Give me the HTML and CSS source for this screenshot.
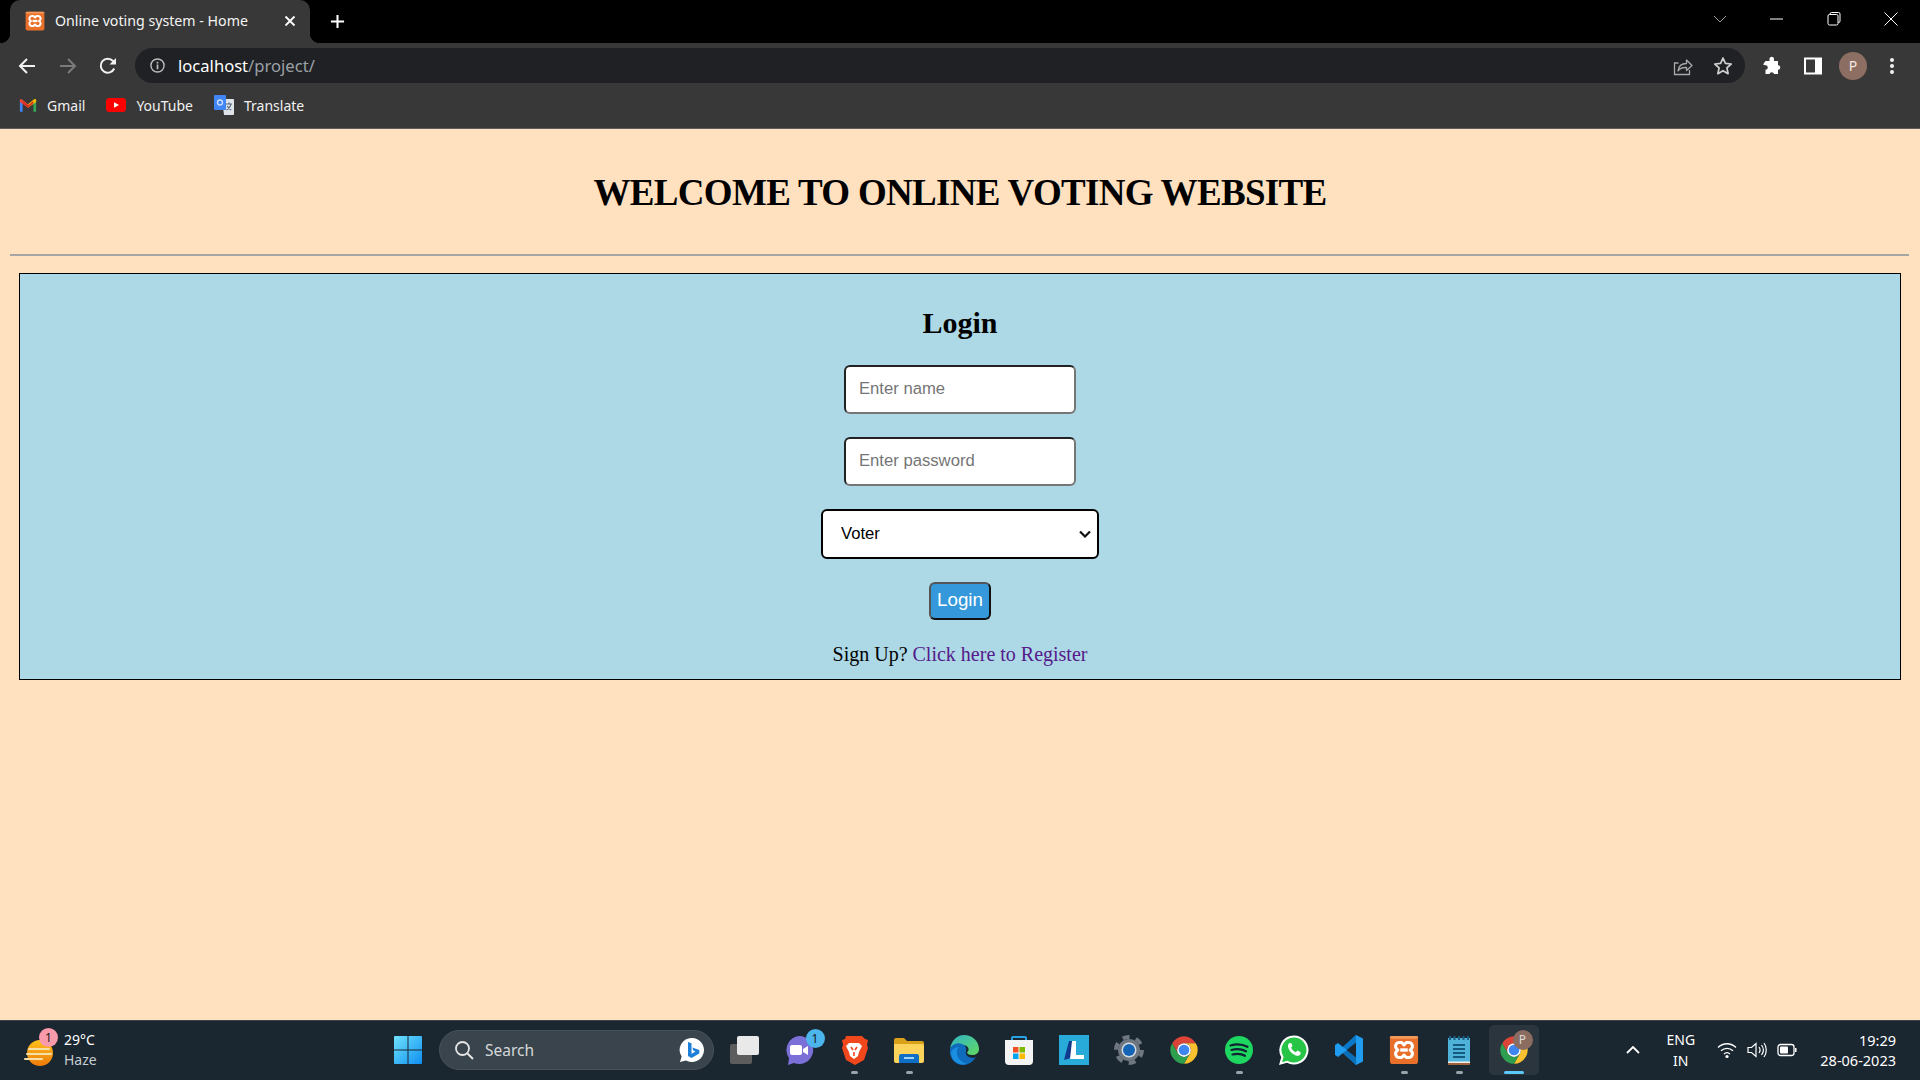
FILE: index.html
```html
<!DOCTYPE html>
<html lang="en">

<head>
    <meta charset="UTF-8">
    <title>Online voting system - Home</title>
    <link rel="stylesheet" href="styles.css">
</head>

<body>
    <svg class="defs" width="0" height="0">
        <symbol id="xampp" viewBox="0 0 32 32">
            <rect x="1" y="1" width="30" height="30" rx="3" fill="#e8702a"/>
            <rect x="1" y="1" width="30" height="3" rx="1.500" fill="#f29a5e"/>
            <path d="M11 8h2.500l2.500 2.500 2.500-2.500H21a4 4 0 0 1 3 6.600L22.500 16l1.500 1.400A4 4 0 0 1 21 24h-2.500L16 21.500 13.500 24H11a4 4 0 0 1-3-6.600L9.500 16 8 14.600A4 4 0 0 1 11 8z" fill="#e8702a" stroke="#fff" stroke-width="3.200" stroke-linejoin="round"/>
            <path d="M12 16h8" stroke="#fff" stroke-width="3.600"/>
        </symbol>
        <symbol id="chrome" viewBox="0 0 48 48">
            <path d="M43 13H24A11 11 0 0 0 14.500 29.500L5 13A22 22 0 0 1 43 13z" fill="#db4437"/>
            <path d="M43 13H24A11 11 0 0 1 33.500 29.500L24 46A22 22 0 0 0 43 13z" fill="#fbc02d"/>
            <path d="M24 46l9.500-16.500A11 11 0 0 1 14.500 29.500L5 13A22 22 0 0 0 24 46z" fill="#2e9e4f"/>
            <circle cx="24" cy="24" r="11" fill="#fff"/>
            <circle cx="24" cy="24" r="8.500" fill="#3f86f0"/>
        </symbol>
    </svg>

    <div class="browser">
        <div class="tabstrip">
            <div class="tab">
                <svg class="favicon"><use href="#xampp"/></svg>
                <span class="tab-title">Online voting system - Home</span>
                <svg class="tab-close" viewBox="0 0 12 12"><path d="M1.500 1.500l9 9m0-9l-9 9" stroke="#fff" stroke-width="1.800"/></svg>
            </div>
            <svg class="new-tab" viewBox="0 0 16 16"><path d="M8 1v14M1 8h14" stroke="#fff" stroke-width="2.200"/></svg>
            <div class="window-controls">
                <svg class="win-btn chevron" viewBox="0 0 14 8"><path d="M1 1l6 6 6-6" fill="none" stroke="#9a9a9a"/></svg>
                <svg class="win-btn" viewBox="0 0 14 14"><path d="M0 7h13" stroke="#fff"/></svg>
                <svg class="win-btn" viewBox="0 0 14 14"><path d="M3 2.500V2a1.500 1.500 0 0 1 1.500-1.500h7A1.500 1.500 0 0 1 13 2v7a1.500 1.500 0 0 1-1.500 1.500H11" fill="none" stroke="#fff"/><rect x="1" y="2.500" width="10" height="10.500" rx="1.500" fill="none" stroke="#fff"/></svg>
                <svg class="win-btn" viewBox="0 0 14 14"><path d="M.5.500l13 13m0-13l-13 13" stroke="#fff"/></svg>
            </div>
        </div>

        <div class="toolbar">
            <svg class="nav-icon" viewBox="0 0 18 18"><path d="M17 9H2.500M9 2L2 9l7 7" fill="none" stroke="#f1f1f1" stroke-width="2"/></svg>
            <svg class="nav-icon" viewBox="0 0 18 18"><path d="M1 9h14.500M9 2l7 7-7 7" fill="none" stroke="#7b7b7b" stroke-width="2"/></svg>
            <svg class="nav-icon" viewBox="0 0 18 18"><path d="M15.200 11.500A7 7 0 1 1 14 4l1.800 2" fill="none" stroke="#f1f1f1" stroke-width="2"/><path d="M17 1v6.500h-6.500z" fill="#f1f1f1"/></svg>
            <div class="omnibox">
                <svg class="info-icon" viewBox="0 0 16 16"><circle cx="8" cy="8" r="7" fill="none" stroke="#bdbdbd" stroke-width="1.500"/><path d="M8 7v5M8 4v1.800" stroke="#bdbdbd" stroke-width="1.800"/></svg>
                <span class="url">localhost<span class="url-path">/project/</span></span>
                <svg class="omni-icon share" viewBox="0 0 20 20"><path d="M5.500 7H1.500v11.500h15V14" fill="none" stroke="#a8a8a8" stroke-width="1.300"/><path d="M5 15c.5-5 4-7.500 8.500-7.500V4l5.500 5.500-5.500 5V11.500C9.500 11.300 6.500 12.500 5 15z" fill="none" stroke="#a8a8a8" stroke-width="1.300" stroke-linejoin="round"/></svg>
                <svg class="omni-icon star" viewBox="0 0 20 20"><path d="M10 2l2.400 5.400 5.800.6-4.300 3.900 1.200 5.800-5.100-3-5.100 3 1.200-5.800L1.800 8l5.800-.6z" fill="none" stroke="#d0d0d0" stroke-width="1.700" stroke-linejoin="round"/></svg>
            </div>
            <svg class="tool-icon puzzle" viewBox="0 0 20 20"><path d="M7.500 2.500a2.300 2.300 0 0 1 4.500 0V5h4v4.200a2.300 2.300 0 0 1 0 4.600V18h-4a2.300 2.300 0 0 0-4.500 0H3.500v-4.200a2.300 2.300 0 0 0 0-4.600L1 8.500 3.500 5h4z" fill="#fff"/></svg>
            <svg class="tool-icon panel" viewBox="0 0 18 18"><rect x="1" y="1.500" width="16" height="15" fill="none" stroke="#fff" stroke-width="2"/><rect x="11" y="1.500" width="6" height="15" fill="#fff"/></svg>
            <div class="avatar">P</div>
            <svg class="tool-icon dots" viewBox="0 0 6 18"><circle cx="3" cy="3" r="2" fill="#f1f1f1"/><circle cx="3" cy="9" r="2" fill="#f1f1f1"/><circle cx="3" cy="15" r="2" fill="#f1f1f1"/></svg>
        </div>

        <div class="bookmarks">
            <div class="bookmark">
                <svg class="bm-icon gmail" viewBox="0 0 20 16"><path d="M1 15V3l3 2v10z" fill="#4285f4"/><path d="M16 15V5l3-2v12z" fill="#34a853"/><path d="M1 4V2c0-1.200 1.300-1.700 2.200-1L10 6.500v4z" fill="#ea4335"/><path d="M19 4V2c0-1.200-1.300-1.700-2.200-1L10 6.500v4z" fill="#fbbc04"/><path d="M4 3l6 4.800L16 3v2.500l-6 5-6-5z" fill="#d93025"/></svg>
                <span>Gmail</span>
            </div>
            <div class="bookmark">
                <svg class="bm-icon youtube" viewBox="0 0 20 14"><rect width="20" height="14" rx="3.500" fill="#f00"/><path d="M8 4.200L13 7l-5 2.800z" fill="#fff"/></svg>
                <span>YouTube</span>
            </div>
            <div class="bookmark">
                <svg class="bm-icon translate" viewBox="0 0 20 20"><path d="M8 4h11a1 1 0 0 1 1 1v14a1 1 0 0 1-1 1H10z" fill="#dfe4ea"/><path d="M12 9h6m-3-1.500V9m2 0c-.6 3-2.500 5-4.500 6m.8-4c.8 1.800 2.400 3.300 4 4" fill="none" stroke="#5c6b7a" stroke-width="1.200"/><rect width="12" height="15" rx="1" fill="#4285f4"/><circle cx="6" cy="7.500" r="2.500" fill="none" stroke="#cfe0fb" stroke-width="1.300"/></svg>
                <span>Translate</span>
            </div>
        </div>
    </div>

    <main class="page">
        <h1 class="site-title">WELCOME TO ONLINE VOTING WEBSITE</h1>
        <hr class="rule">
        <section class="login-box">
            <h2 class="login-title">Login</h2>
            <form class="login-form">
                <input class="field" type="text" placeholder="Enter name">
                <input class="field" type="password" placeholder="Enter password">
                <select class="role">
                    <option>Voter</option>
                    <option>Group</option>
                </select>
                <button class="login-btn" type="button">Login</button>
            </form>
            <p class="signup">Sign Up? <a href="#" class="signup-link">Click here to Register</a></p>
        </section>
    </main>

    <footer class="taskbar">
        <div class="weather">
            <div class="weather-icon">
                <svg class="sun" viewBox="0 0 30 30">
                    <defs><linearGradient id="sung" x1="0" y1="0" x2="0" y2="1"><stop offset="0" stop-color="#fdc21a"/><stop offset="1" stop-color="#ee7a0c"/></linearGradient></defs>
                    <circle cx="16" cy="15" r="13" fill="url(#sung)"/>
                    <path d="M5 11h20M3 16h24M1 21h17" stroke="#f6dfa8" stroke-width="2" stroke-linecap="round"/>
                </svg>
                <span class="badge pink">1</span>
            </div>
            <div class="weather-text">
                <span class="temp">29°C</span>
                <span class="sky">Haze</span>
            </div>
        </div>

        <div class="app start">
            <svg class="app-icon" viewBox="0 0 30 30">
                <defs><linearGradient id="wing" x1="0" y1="0" x2="1" y2="1"><stop offset="0" stop-color="#6fe3fd"/><stop offset="1" stop-color="#0e8ef0"/></linearGradient></defs>
                <path d="M1 2a1 1 0 0 1 1-1h12.500v13.500H1zM15.500 1H28a1 1 0 0 1 1 1v12.500H15.500zM1 15.500h13.500V29H2a1 1 0 0 1-1-1zM15.500 15.500H29V28a1 1 0 0 1-1 1H15.500z" fill="url(#wing)"/>
            </svg>
        </div>

        <div class="search">
            <svg class="search-icon" viewBox="0 0 20 20"><circle cx="8.500" cy="8.500" r="6.500" fill="none" stroke="#e6e6e6" stroke-width="1.800"/><path d="M13.500 13.500L19 19" stroke="#e6e6e6" stroke-width="2"/></svg>
            <span class="search-text">Search</span>
            <svg class="bing" viewBox="0 0 26 26">
                <path d="M13 1a12 12 0 1 1-6 22.400L1 25l1.600-5.500A12 12 0 0 1 13 1z" fill="#fff"/>
                <path d="M9 5l3.500 1.300v10.500l4-2.300-2.200-1-1-3 7 2.500v3.500L12.500 21 9 19z" fill="#1d7fd8"/>
            </svg>
        </div>

        <div class="apps">
            <div class="app">
                <svg class="app-icon" viewBox="0 0 30 30"><rect x="1" y="9" width="22" height="20" rx="2" fill="#5d5d5d"/><rect x="8" y="1" width="22" height="19" rx="2" fill="#e9e9e9"/></svg>
            </div>
            <div class="app">
                <svg class="app-icon" viewBox="0 0 30 30"><path d="M15 1a14 14 0 1 1-5 27l-6 2 1-7A14 14 0 0 1 15 1z" fill="#7b6fd8"/><rect x="6" y="10" width="12" height="10" rx="2" fill="#fff"/><path d="M19 14l5-3v9l-5-3z" fill="#fff"/></svg>
                <span class="badge blue">1</span>
            </div>
            <div class="app">
                <svg class="app-icon" viewBox="0 0 30 30"><path d="M7 1h16l3 3 3 1-1 5 1 3-4 12-9 5-9-5L3 13l1-3-1-5 3-1z" fill="#f1471d"/><path d="M10 8h10l3 3-3 6-1 4-4 3-4-3-1-4-3-6z" fill="#fff"/><path d="M12 12l2 3m4-3l-2 3M15 17v4" stroke="#f1471d" stroke-width="1.600"/></svg>
                <span class="dot"></span>
            </div>
            <div class="app">
                <svg class="app-icon" viewBox="0 0 30 30"><path d="M0 5a2 2 0 0 1 2-2h8l3 3h15a2 2 0 0 1 2 2v3H0z" fill="#d9a019"/><path d="M0 9h28a2 2 0 0 1 2 2v15a2 2 0 0 1-2 2H2a2 2 0 0 1-2-2z" fill="#fcd45c"/><path d="M5 28v-7a2 2 0 0 1 2-2h16a2 2 0 0 1 2 2v7z" fill="#0f6fc6"/><rect x="10" y="22" width="10" height="2" fill="#9fd3f7"/></svg>
                <span class="dot"></span>
            </div>
            <div class="app">
                <svg class="app-icon" viewBox="0 0 30 30">
                    <defs><linearGradient id="edgeg" x1="0" y1="0" x2="1" y2="1"><stop offset="0" stop-color="#2fb4c9"/><stop offset="1" stop-color="#63d95f"/></linearGradient></defs>
                    <path d="M1 14C2 6 8 0 15 0c8 0 15 6 15 14 0 4-3 6-7 6-3 0-5-1-5-3 3-1 2-7-4-7-7 0-13 1-13 4z" fill="url(#edgeg)"/>
                    <path d="M1 14c2-5 8-7 12-5 3 1 5 4 4 7-1 4 2 7 8 7l2-1c-3 5-8 8-13 8C6 30 0 23 1 14z" fill="#0f6cbd"/>
                    <path d="M10 12c-4 3-3 14 8 17-8 2-15-3-16-10 0-4 4-7 8-7z" fill="#1a8ee0"/>
                </svg>
            </div>
            <div class="app">
                <svg class="app-icon" viewBox="0 0 30 30"><path d="M8 7V3a1 1 0 0 1 1-1h12a1 1 0 0 1 1 1v4" fill="none" stroke="#27a3e3" stroke-width="2"/><path d="M1 5h28v21a4 4 0 0 1-4 4H5a4 4 0 0 1-4-4z" fill="#f4f4f4"/><rect x="9" y="12" width="5.500" height="5.500" fill="#f25022"/><rect x="15.500" y="12" width="5.500" height="5.500" fill="#7fba00"/><rect x="9" y="18.500" width="5.500" height="5.500" fill="#00a4ef"/><rect x="15.500" y="18.500" width="5.500" height="5.500" fill="#ffb900"/></svg>
            </div>
            <div class="app">
                <svg class="app-icon" viewBox="0 0 30 30"><rect width="30" height="30" fill="#29abd9"/><path d="M10 6h5l-3 17-7 2z" fill="#123a8c"/><path d="M13 6h4v14h8v4H11z" fill="#fff"/></svg>
            </div>
            <div class="app">
                <svg class="app-icon" viewBox="0 0 30 30"><circle cx="15" cy="15" r="11" fill="#6f7780"/><circle cx="15" cy="15" r="13" fill="none" stroke="#6f7780" stroke-width="4" stroke-dasharray="7 6.600"/><circle cx="15" cy="15" r="7.500" fill="#d7dbdf"/><circle cx="15" cy="15" r="6" fill="#1465b5"/></svg>
            </div>
            <div class="app">
                <svg class="app-icon"><use href="#chrome"/></svg>
            </div>
            <div class="app">
                <svg class="app-icon" viewBox="0 0 30 30"><circle cx="15" cy="15" r="14" fill="#1ed760"/><path d="M6.500 10.500c6-1.800 12-1.300 17 1.300M7.500 15c5-1.400 10-1 14.500 1.300M8.500 19.500c4.500-1.100 9-.8 12.500 1.300" fill="none" stroke="#123" stroke-width="2.200" stroke-linecap="round"/></svg>
                <span class="dot"></span>
            </div>
            <div class="app">
                <svg class="app-icon" viewBox="0 0 30 30"><path d="M15 .5a14.500 14.500 0 1 1-7 27.200L0 30l2.300-7.800A14.500 14.500 0 0 1 15 .5z" fill="#fff"/><path d="M15 2.500a12.500 12.500 0 1 1-6.500 23.200L3 27.200l1.600-5.300A12.500 12.500 0 0 1 15 2.500z" fill="#28c445"/><path d="M10.500 8c-1.500 1-2 3-1 5.500 1.300 3 4 5.800 7.200 7 2.300.8 4 0 5-1.500l-.3-2-3-1.500-1.500 1.700c-2-.7-4-2.800-4.800-4.800L13.500 11l-1.300-3z" fill="#fff"/></svg>
            </div>
            <div class="app">
                <svg class="app-icon" viewBox="0 0 30 30"><path d="M22 0l7 3.500v23L22 30 9 18l-5 4-3-2v-10l3-2 5 4z" fill="#1f9cf0"/><path d="M22 0v8l-9 7-4-3z" fill="#0a78c8"/><path d="M22 30v-8l-9-7-4 3z" fill="#0a6fb8"/><path d="M22 7.500v15L12.500 15z" fill="#1a2530"/></svg>
            </div>
            <div class="app">
                <svg class="app-icon"><use href="#xampp"/></svg>
                <span class="dot"></span>
            </div>
            <div class="app">
                <svg class="app-icon" viewBox="0 0 30 30"><rect x="4" y="3" width="22" height="25" fill="#4fb3d9"/><path d="M4 28h22v2H4z" fill="#a0603a"/><path d="M4 26.500h22V28H4z" fill="#eee"/><path d="M6 1v4m4.500-4v4m4.500-4v4m4.500-4v4m4.500-4v4" stroke="#1a5f85" stroke-width="2"/><path d="M9 10h12M9 14h12M9 18h12M9 22h12" stroke="#145a7e" stroke-width="2"/></svg>
                <span class="dot"></span>
            </div>
            <div class="app active">
                <svg class="app-icon"><use href="#chrome"/></svg>
                <span class="badge profile">P</span>
                <span class="running"></span>
            </div>
        </div>

        <div class="tray">
            <svg class="tray-chevron" viewBox="0 0 14 8"><path d="M1 7l6-6 6 6" fill="none" stroke="#fff" stroke-width="1.800"/></svg>
            <div class="lang"><span>ENG</span><span>IN</span></div>
            <svg class="tray-icon" viewBox="0 0 20 18"><path d="M1 6.500c5-5 13-5 18 0M4 9.800c3.500-3.300 8.500-3.300 12 0M7 13c1.700-1.500 4.300-1.500 6 0" fill="none" stroke="#fff" stroke-width="1.300"/><circle cx="10" cy="15.500" r="1.600" fill="#fff"/></svg>
            <svg class="tray-icon" viewBox="0 0 20 18"><path d="M1 6.500h3.500L9 2.500v13l-4.500-4H1z" fill="none" stroke="#fff" stroke-width="1.200"/><path d="M12 6c1.300 1.800 1.300 4.200 0 6M14.500 4c2.300 3 2.300 7 0 10M17 2c3 4 3 10 0 14" fill="none" stroke="#fff" stroke-width="1.200"/></svg>
            <svg class="tray-icon" viewBox="0 0 20 14"><rect x="1" y="1.500" width="16" height="11" rx="2.500" fill="none" stroke="#fff" stroke-width="1.300"/><rect x="3" y="3.500" width="8" height="7" rx="1" fill="#fff"/><rect x="18" y="5" width="1.500" height="4" fill="#fff"/></svg>
            <div class="clock"><span>19:29</span><span>28-06-2023</span></div>
        </div>
    </footer>
</body>

</html>
```

FILE: styles.css
```css
* {
    box-sizing: border-box;
}

body {
    margin: 0;
    height: 1080px;
    display: flex;
    flex-direction: column;
    overflow: hidden;
    background: #ffe1c0;
}

.defs {
    position: absolute;
}

/* browser chrome */
.browser {
    font-family: "Noto Sans", sans-serif;
    color: #f1f1f1;
    background: #383838;
    border-bottom: 1px solid #5c5c5c;
}

.tabstrip {
    height: 43px;
    background: #000;
    display: flex;
    align-items: center;
    padding-left: 10px;
}

.tab {
    position: relative;
    width: 300px;
    height: 43px;
    background: #383838;
    border-radius: 10px 10px 0 0;
    display: flex;
    align-items: center;
    padding: 0 14px 2px 15px;
}

.tab:before,
.tab:after {
    content: "";
    position: absolute;
    bottom: 0;
    width: 10px;
    height: 10px;
}

.tab:before {
    left: -10px;
    background: radial-gradient(circle at 0 0, #000 10px, #383838 10.5px);
}

.tab:after {
    right: -10px;
    background: radial-gradient(circle at 100% 0, #000 10px, #383838 10.5px);
}

.favicon {
    width: 20px;
    height: 20px;
}

.tab-title {
    margin-left: 10px;
    font-size: 14.200px;
    color: #f4f4f4;
    flex: 1;
    white-space: nowrap;
}

.tab-close {
    width: 12px;
    height: 12px;
}

.new-tab {
    width: 15px;
    height: 15px;
    margin-left: 20px;
}

.window-controls {
    margin-left: auto;
    margin-bottom: 6px;
    display: flex;
    align-items: center;
    padding-right: 22px;
    gap: 43px;
}

.win-btn {
    width: 14px;
    height: 14px;
}

.toolbar {
    height: 45px;
    display: flex;
    align-items: center;
    padding: 0 0 0 18px;
}

.nav-icon {
    width: 18px;
    height: 18px;
    margin-right: 23px;
}

.nav-icon:nth-child(2) {
    margin-right: 22px;
}

.nav-icon:nth-child(3) {
    margin-right: 18px;
}

.omnibox {
    width: 1610px;
    height: 35px;
    border-radius: 18px;
    background: #202124;
    display: flex;
    align-items: center;
    padding: 0 12px 0 15px;
}

.info-icon {
    width: 15px;
    height: 15px;
}

.url {
    margin-left: 13px;
    font-size: 16.600px;
    color: #fff;
    flex: 1;
}

.url-path {
    color: #9aa0a6;
}

.omni-icon {
    width: 20px;
    height: 20px;
}

.share {
    margin-right: 20px;
}

.tool-icon {
    width: 20px;
    height: 20px;
}

.puzzle {
    margin-left: 17px;
}

.panel {
    width: 18px;
    height: 18px;
    margin-left: 22px;
}

.avatar {
    width: 28px;
    height: 28px;
    margin-left: 17px;
    border-radius: 50%;
    background: #8d6e63;
    color: #f5e9e4;
    font-size: 14px;
    display: flex;
    align-items: center;
    justify-content: center;
}

.dots {
    width: 6px;
    height: 18px;
    margin-left: 22px;
}

.bookmarks {
    height: 40px;
    display: flex;
    align-items: center;
    padding: 0 0 6px 19px;
    gap: 21px;
    font-size: 14px;
}

.bookmark {
    display: flex;
    align-items: center;
    gap: 10px;
}

.bm-icon {
    width: 18px;
    height: 15px;
}

.youtube {
    width: 20px;
    height: 14px;
}

.translate {
    width: 20px;
    height: 20px;
}

/* page */
.page {
    flex: 1;
    padding: 0 10px;
}

.site-title {
    margin: 37px 0 0;
    height: 54px;
    line-height: 54px;
    font-family: "Liberation Serif", serif;
    font-size: 37px;
    letter-spacing: -0.7px;
    font-weight: bold;
    text-align: center;
    color: #000;
}

.rule {
    margin: 34px 1px 0 0;
    border: 0;
    border-top: 2px solid #a5a5a5;
}

.login-box {
    margin: 17px 9px 0;
    height: 407px;
    border: 1.500px solid #000;
    background: #add8e6;
    text-align: center;
    font-family: "Liberation Serif", serif;
}

.login-title {
    margin: 0;
    padding-top: 32px;
    font-size: 30px;
    line-height: 34px;
    color: #000;
}

.login-form {
    margin-top: 25px;
    display: flex;
    flex-direction: column;
    align-items: center;
    font-family: "Liberation Sans", sans-serif;
}

.field {
    width: 232px;
    height: 49px;
    margin-bottom: 23px;
    padding: 0 13px 2px;
    font-family: "Liberation Sans", sans-serif;
    font-size: 16.670px;
    background: #fff;
    border: 2.500px solid;
    border-color: #222 #767676 #767676 #222;
    border-radius: 6px;
}

.field::placeholder {
    color: #757575;
}

.role {
    width: 278px;
    height: 50px;
    margin-bottom: 23px;
    padding: 0 18px 2px;
    font-family: "Liberation Sans", sans-serif;
    font-size: 16.670px;
    color: #000;
    appearance: none;
    background: #fff url("data:image/svg+xml,%3Csvg xmlns='http://www.w3.org/2000/svg' width='12' height='8' viewBox='0 0 12 8'%3E%3Cpath d='M1 1.500l5 5 5-5' fill='none' stroke='%23111' stroke-width='2.200'/%3E%3C/svg%3E") no-repeat right 6px center;
    border: 2.500px solid #000;
    border-radius: 6px;
}

.login-btn {
    width: 62px;
    height: 38px;
    padding: 0 0 2px;
    font-family: "Liberation Sans", sans-serif;
    font-size: 18.750px;
    color: #fff;
    background: #3498db;
    border: 2.500px solid;
    border-color: #555 #111 #111 #555;
    border-radius: 6px;
}

.signup {
    margin: 23px 0 0;
    font-size: 20px;
    line-height: 23px;
    color: #000;
}

.signup-link {
    color: #551a8b;
    text-decoration: none;
}

/* taskbar */
.taskbar {
    height: 60px;
    padding-bottom: 1px;
    background: #1a2630;
    border-top: 1px solid #3a4148;
    display: flex;
    align-items: center;
    font-family: "Noto Sans", sans-serif;
    color: #fff;
}

.weather {
    width: 380px;
    display: flex;
    align-items: center;
    padding-left: 24px;
}

.weather-icon {
    position: relative;
    width: 30px;
    height: 30px;
    margin-top: 6px;
}

.sun {
    width: 30px;
    height: 30px;
}

.weather-text {
    margin-left: 10px;
    display: flex;
    flex-direction: column;
    font-size: 14px;
    line-height: 20px;
}

.sky {
    color: #c6cbd0;
}

.badge {
    position: absolute;
    width: 19px;
    height: 19px;
    border-radius: 50%;
    font-size: 12px;
    line-height: 19px;
    text-align: center;
    color: #1a1a1a;
}

.pink {
    top: -10px;
    left: 15px;
    background: #f99aaa;
}

.blue {
    top: 8px;
    left: 34px;
    background: #4bb5ec;
}

.profile {
    top: 9px;
    left: 26px;
    width: 20px;
    height: 20px;
    line-height: 20px;
    background: #8a6c60;
    color: #ddd;
}

.app {
    position: relative;
    width: 55px;
    height: 58px;
    display: flex;
    align-items: center;
    justify-content: center;
}

.app-icon {
    width: 30px;
    height: 30px;
}

.search {
    width: 275px;
    height: 40px;
    margin-left: 4px;
    margin-right: 2.500px;
    border-radius: 20px;
    background: #39444c;
    border: 1px solid #46515a;
    display: flex;
    align-items: center;
    padding: 0 8px 0 14px;
}

.search-icon {
    width: 20px;
    height: 20px;
}

.search-text {
    margin-left: 11px;
    flex: 1;
    font-size: 15.500px;
    color: #d5d8da;
}

.bing {
    width: 26px;
    height: 26px;
}

.apps {
    display: flex;
}

.dot {
    position: absolute;
    left: 24px;
    bottom: 5px;
    width: 7px;
    height: 3px;
    border-radius: 2px;
    background: #9aa3aa;
}

.active:before {
    content: "";
    position: absolute;
    left: 2.500px;
    right: 2.500px;
    top: 4px;
    bottom: 4px;
    border-radius: 5px;
    background: rgba(255, 255, 255, 0.07);
}

.active .app-icon {
    position: relative;
}

.running {
    position: absolute;
    left: 17px;
    bottom: 5px;
    width: 20px;
    height: 3px;
    border-radius: 2px;
    background: #5cc8fa;
}

.tray {
    flex: 1;
    display: flex;
    align-items: center;
    padding-left: 84px;
    padding-right: 24px;
}

.tray-chevron {
    width: 14px;
    height: 8px;
}

.lang {
    margin-left: 27px;
    display: flex;
    flex-direction: column;
    align-items: center;
    font-size: 14px;
    line-height: 21px;
}

.tray-icon {
    width: 20px;
    height: 18px;
    margin-left: 10px;
}

.lang + .tray-icon {
    margin-left: 22px;
}

.clock {
    margin-left: auto;
    display: flex;
    flex-direction: column;
    align-items: flex-end;
    font-size: 14.500px;
    line-height: 20px;
}
```
